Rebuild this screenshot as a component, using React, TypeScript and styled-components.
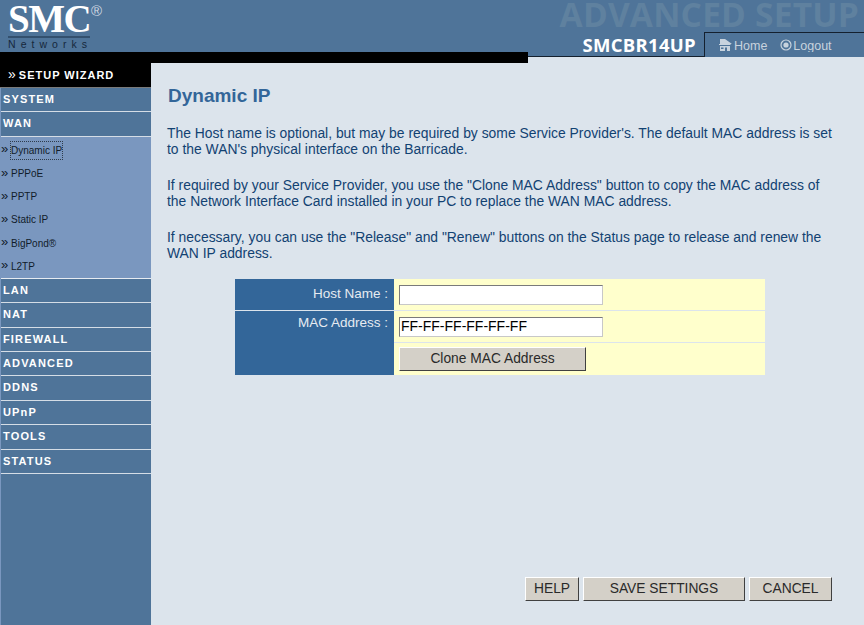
import styled, { createGlobalStyle } from "styled-components";

const GlobalStyle = createGlobalStyle`
  html, body {
    margin: 0;
    padding: 0;
    height: 100%;
    overflow: hidden;
    background: #dce4ec;
    font-family: "Liberation Sans", Arial, sans-serif;
  }
  #root { height: 100%; }
`;

const mainMenu = ["SYSTEM", "WAN"];
const subMenu = ["Dynamic IP", "PPPoE", "PPTP", "Static IP", "BigPond®", "L2TP"];
const lowerMenu = ["LAN", "NAT", "FIREWALL", "ADVANCED", "DDNS", "UPnP", "TOOLS", "STATUS"];

function App() {
  return (
    <Page>
      <GlobalStyle />
      <Header>
        <Logo>
          <LogoMark>
            SMC<Registered>®</Registered>
          </LogoMark>
          <LogoTag>Networks</LogoTag>
        </Logo>
        <HeaderRight>
          <GhostTitle>ADVANCED SETUP</GhostTitle>
          <HeaderRow>
            <Model>SMCBR14UP</Model>
            <TopNav>
              <TopLink>
                <svg width="15" height="14" viewBox="0 0 15 14">
                  <path d="M2 1h5l7 5H12.5v1H1V6h1V1Z" fill="#c8d3de" />
                  <path d="M2 8h10v5H9V9.5H7V13H2V8Z" fill="#c8d3de" />
                  <path d="M3 9.5h2.5V11H3Z" fill="#4f7499" />
                </svg>
                Home
              </TopLink>
              <TopLink>
                <svg width="12" height="12" viewBox="0 0 12 12">
                  <circle cx="6" cy="6" r="5" fill="none" stroke="#c8d3de" strokeWidth="1.2" />
                  <circle cx="6" cy="6" r="2.6" fill="#c8d3de" />
                </svg>
                Logout
              </TopLink>
            </TopNav>
          </HeaderRow>
        </HeaderRight>
      </Header>
      <Strip>
        <BlackBar />
        <ModelEdge />
        <NavEdge />
      </Strip>
      <Body>
        <Sidebar>
          <Wizard>
            <Chevron>»</Chevron>SETUP WIZARD
          </Wizard>
          {mainMenu.map((m) => (
            <MenuItem key={m}>{m}</MenuItem>
          ))}
          <SubMenu>
            {subMenu.map((s, i) => (
              <SubItem key={s}>
                <SubChevron>»</SubChevron>
                <SubLabel $active={i === 0}>{s}</SubLabel>
              </SubItem>
            ))}
          </SubMenu>
          {lowerMenu.map((m) => (
            <MenuItem key={m}>{m}</MenuItem>
          ))}
        </Sidebar>
        <Main>
          <Title>Dynamic IP</Title>
          <Para>
            The Host name is optional, but may be required by some Service Provider's. The default MAC address is set
            to the WAN's physical interface on the Barricade.
          </Para>
          <Para>
            If required by your Service Provider, you use the "Clone MAC Address" button to copy the MAC address of
            the Network Interface Card installed in your PC to replace the WAN MAC address.
          </Para>
          <Para>
            If necessary, you can use the "Release" and "Renew" buttons on the Status page to release and renew the
            WAN IP address.
          </Para>
          <FormTable>
            <LabelCell $h={32} $divider>
              Host Name :
            </LabelCell>
            <FieldCell $h={32}>
              <TextInput />
            </FieldCell>
            <LabelCell $h={64} $short>
              MAC Address :
            </LabelCell>
            <FieldStack>
              <FieldCell $h={32}>
                <TextInput defaultValue="FF-FF-FF-FF-FF-FF" />
              </FieldCell>
              <FieldCell $h={32}>
                <GrayButton $w={187}>Clone MAC Address</GrayButton>
              </FieldCell>
            </FieldStack>
          </FormTable>
          <Actions>
            <GrayButton $w={54}>HELP</GrayButton>
            <GrayButton $w={162}>SAVE SETTINGS</GrayButton>
            <GrayButton $w={83}>CANCEL</GrayButton>
          </Actions>
        </Main>
      </Body>
    </Page>
  );
}

export default App;

const Page = styled.div`
  width: 864px;
  height: 625px;
  display: flex;
  flex-direction: column;
  overflow: hidden;
`;

const Header = styled.header`
  height: 52px;
  display: flex;
  justify-content: space-between;
  background: #4f7499;
`;

const Logo = styled.div`
  width: 110px;
  padding: 1px 0 0 8px;
  display: flex;
  flex-direction: column;
`;

const LogoMark = styled.div`
  position: relative;
  height: 35px;
  width: 82px;
  color: #fff;
  font: bold 39px/35px "Liberation Serif", serif;
  letter-spacing: -1.5px;
  border-bottom: 2px solid #33506e;
  white-space: nowrap;
`;

const Registered = styled.span`
  position: absolute;
  left: 83px;
  top: 3px;
  font: 15px/14px "Liberation Sans", sans-serif;
  letter-spacing: 0;
  color: #cfd8e2;
`;

const LogoTag = styled.div`
  font-size: 10.5px;
  line-height: 11px;
  color: #16283c;
  letter-spacing: 5.05px;
  margin-top: 1px;
  white-space: nowrap;
`;

const HeaderRight = styled.div`
  width: 336px;
  display: flex;
  flex-direction: column;
  align-items: flex-end;
`;

const GhostTitle = styled.div`
  height: 32px;
  font: bold 33.5px/29px "Open Sans", sans-serif;
  color: #5f819f;
  letter-spacing: 0.2px;
  white-space: nowrap;
  margin-right: 5px;
`;

const HeaderRow = styled.div`
  height: 20px;
  width: 100%;
  display: flex;
  justify-content: flex-end;
`;

const Model = styled.div`
  font: bold 18.5px/26px "Open Sans", sans-serif;
  color: #fff;
  letter-spacing: 0.3px;
  margin-right: 8px;
`;

const TopNav = styled.nav`
  width: 160px;
  border-top: 1px solid #14202e;
  border-left: 1px solid #14202e;
  display: flex;
  align-items: flex-start;
  gap: 13px;
  padding: 5px 0 0 13px;
  box-sizing: border-box;
`;

const TopLink = styled.span`
  display: flex;
  align-items: center;
  gap: 1px;
  font-size: 12.5px;
  line-height: 17px;
  color: #c8d3de;
  white-space: nowrap;
  svg {
    margin-top: -3px;
  }
`;

const Strip = styled.div`
  height: 11px;
  display: flex;
  align-items: flex-start;
`;

const BlackBar = styled.div`
  width: 528px;
  height: 11px;
  background: #000;
`;

const ModelEdge = styled.div`
  width: 176px;
  height: 5px;
  box-sizing: border-box;
  background: #4f7499;
  border-bottom: 1px solid #14202e;
`;

const NavEdge = styled.div`
  flex: 1;
  height: 5px;
  background: #4f7499;
  border-left: 1px solid #14202e;
`;

const Body = styled.div`
  flex: 1;
  display: flex;
`;

const Sidebar = styled.aside`
  width: 151px;
  flex-shrink: 0;
  background: #4f7499;
  border-left: 1px solid #7a97bf;
  box-sizing: border-box;
`;

const Wizard = styled.div`
  height: 24px;
  margin-left: -1px;
  background: #000;
  color: #fff;
  font-weight: bold;
  font-size: 11px;
  line-height: 23px;
  letter-spacing: 1px;
  padding-left: 8px;
  border-bottom: 1px solid #7a7a7a;
  white-space: nowrap;
`;

const Chevron = styled.span`
  font-weight: normal;
  font-size: 14px;
  letter-spacing: 0;
  margin-right: 3px;
`;

const MenuItem = styled.div`
  height: 23.4px;
  border-bottom: 1px solid #d5dde6;
  color: #fff;
  font-weight: bold;
  font-size: 11px;
  line-height: 23.5px;
  letter-spacing: 1.15px;
  padding-left: 2px;
`;

const SubMenu = styled.div`
  background: #7a97bf;
  border-bottom: 1px solid #e6ebf1;
  height: 139px;
  padding-top: 2px;
  display: flex;
  flex-direction: column;
`;

const SubItem = styled.div`
  flex: 1;
  display: flex;
  align-items: center;
  gap: 3px;
  font-size: 10px;
  color: #111c2a;
`;

const SubChevron = styled.span`
  width: 7px;
  font-size: 13px;
  line-height: 12px;
  margin-top: -2px;
`;

const SubLabel = styled.span<{ $active?: boolean }>`
  padding: 2px 0;
  line-height: 13px;
  outline: ${(p) => (p.$active ? "1px dotted #2e3c4c" : "none")};
`;

const Main = styled.main`
  flex: 1;
  padding: 22px 27px 0 16px;
  color: #124272;
  display: flex;
  flex-direction: column;
`;

const Title = styled.h1`
  margin: 0 0 18px 1px;
  font-size: 19px;
  line-height: 22px;
  font-weight: bold;
  color: #336699;
`;

const Para = styled.p`
  margin: 0 0 19.6px;
  font-size: 13.88px;
  line-height: 16.2px;
`;

const FormTable = styled.div`
  margin: -1.8px 0 0 68px;
  width: 530px;
  display: grid;
  grid-template-columns: 159px 371px;
`;

const LabelCell = styled.div<{ $h: number; $divider?: boolean; $short?: boolean }>`
  height: ${(p) => p.$h}px;
  box-sizing: border-box;
  background: #336699;
  color: #e6ebf1;
  font-size: 13.5px;
  text-align: right;
  padding: ${(p) => (p.$short ? "4px" : "7px")} 6px 0 0;
  line-height: 15px;
  ${(p) => (p.$divider ? "border-bottom: 1px solid #dce4ec;" : "")}
`;

const FieldStack = styled.div`
  display: flex;
  flex-direction: column;
`;

const FieldCell = styled.div<{ $h: number }>`
  height: ${(p) => p.$h}px;
  box-sizing: border-box;
  background: #ffffcc;
  border-bottom: 1px solid #dce4ec;
  padding-left: 5px;
  display: flex;
  align-items: center;
  &:last-child {
    border-bottom: none;
  }
`;

const TextInput = styled.input`
  width: 204px;
  height: 20px;
  box-sizing: border-box;
  padding: 0 1px 2px;
  font: 14px "Liberation Sans", sans-serif;
  color: #000;
  background: #fff;
  border: 1px solid;
  border-color: #7a7a7a #c8c8c8 #c8c8c8 #7a7a7a;
  outline: none;
`;

const GrayButton = styled.button<{ $w: number }>`
  width: ${(p) => p.$w}px;
  height: 24px;
  box-sizing: border-box;
  padding: 0 0 2px;
  font: 13.8px "Liberation Sans", sans-serif;
  color: #2a2a2a;
  background: #d4d0c8;
  border: 1px solid;
  border-color: #fff #404040 #404040 #fff;
`;

const Actions = styled.div`
  margin: 202px 0 0 358px;
  display: flex;
  gap: 4px;
`;
